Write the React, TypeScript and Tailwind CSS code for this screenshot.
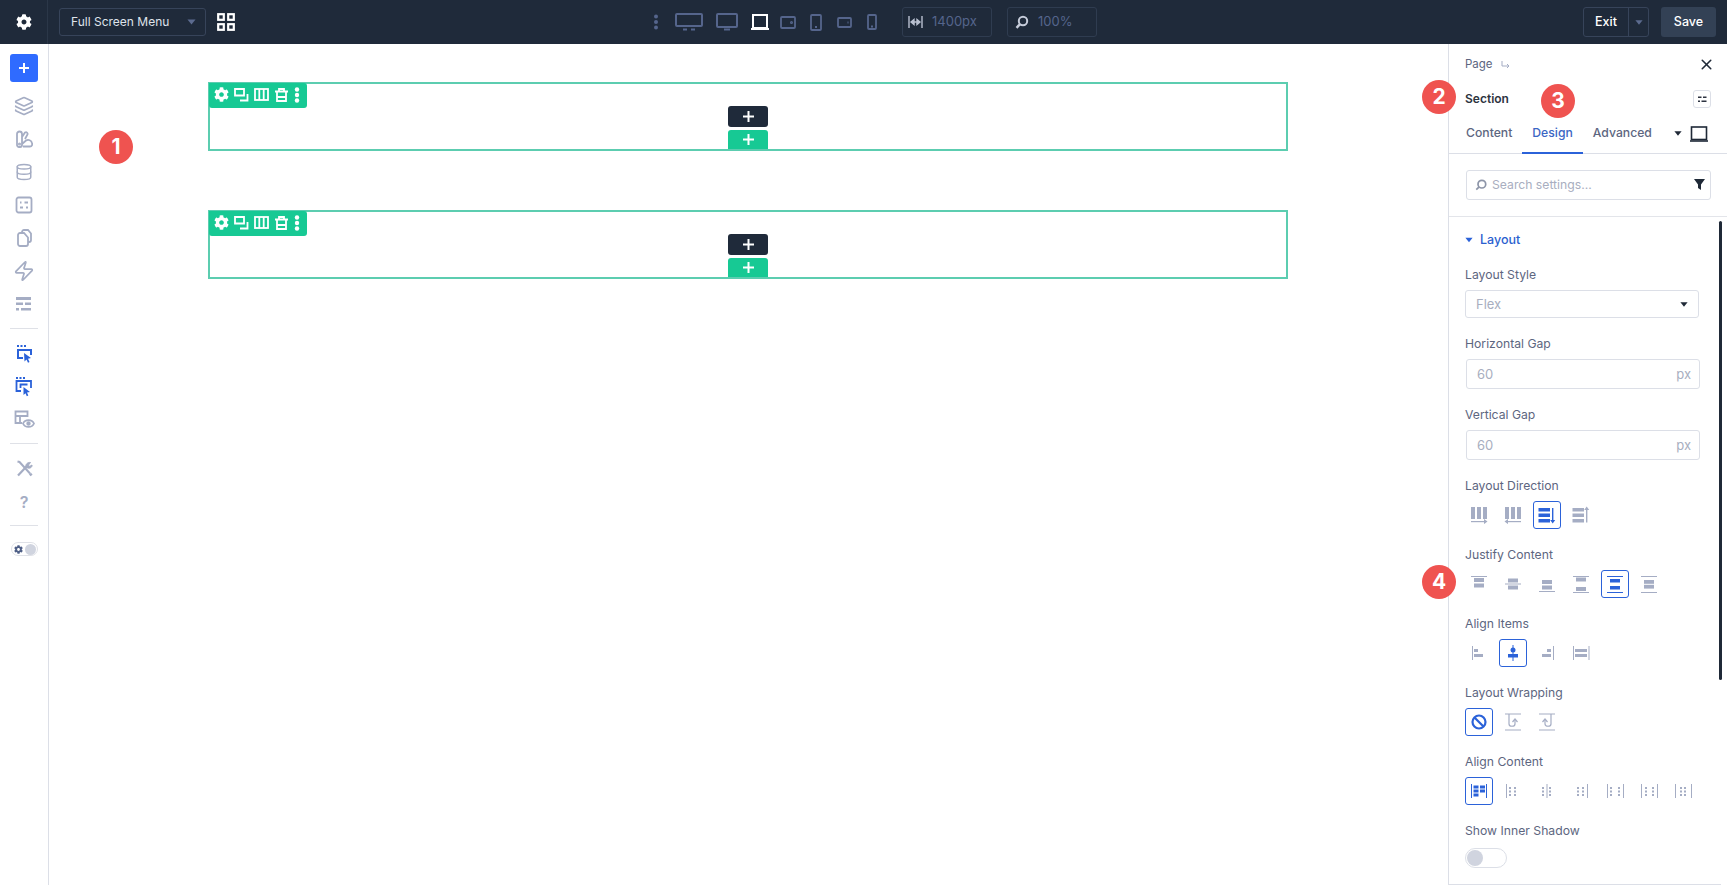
import { Database, Layers, X, Zap } from "lucide-react";
import { FaCog } from "react-icons/fa";

const BLUE = "#2b62d9";

function Badge({ n, className }: { n: number; className: string }) {
  return (
    <div
      className={`absolute z-10 flex h-[34px] w-[34px] items-center justify-center rounded-full bg-[#ef5350] text-[21px] font-bold text-white ${className}`}
    >
      {n}
    </div>
  );
}

function Caret({ className }: { className: string }) {
  return (
    <svg viewBox="0 0 10 6" className={className} fill="currentColor">
      <path d="M0.5 0.3h9L5 5.7z" />
    </svg>
  );
}

/* top bar device icons */
function Devices() {
  const c = "#55658c";
  return (
    <div className="ml-[11px] flex items-center">
      <svg width="6" height="16" viewBox="0 0 6 16" fill={c}>
        <circle cx="3" cy="2.5" r="2" />
        <circle cx="3" cy="8" r="2" />
        <circle cx="3" cy="13.5" r="2" />
      </svg>
      <svg className="ml-[16px]" width="28" height="18" viewBox="0 0 28 18" fill="none" stroke={c} strokeWidth="2">
        <rect x="1" y="1" width="26" height="12" rx="1" />
        <path d="M8 16.5h4M16 16.5h4" />
      </svg>
      <svg className="ml-[13px]" width="22" height="18" viewBox="0 0 22 18" fill="none" stroke={c} strokeWidth="2">
        <rect x="1" y="1" width="20" height="13" rx="1" />
        <path d="M8 16.5h6" />
      </svg>
      <svg className="ml-[13px]" width="18" height="16" viewBox="0 0 18 16" fill="none" stroke="#fff" strokeWidth="2">
        <rect x="2" y="1" width="14" height="13" />
        <path d="M0 15h18" />
      </svg>
      <svg className="ml-[11px]" width="16" height="13" viewBox="0 0 16 13" fill="none" stroke={c} strokeWidth="1.8">
        <rect x="1" y="1" width="14" height="11" rx="1" />
        <circle cx="11.5" cy="6.5" r="0.6" />
      </svg>
      <svg className="ml-[14px]" width="12" height="17" viewBox="0 0 12 17" fill="none" stroke={c} strokeWidth="1.8">
        <rect x="1" y="1" width="10" height="15" rx="1" />
        <path d="M5 13h2" />
      </svg>
      <svg className="ml-[15px]" width="15" height="11" viewBox="0 0 15 11" fill="none" stroke={c} strokeWidth="1.8">
        <rect x="1" y="1" width="13" height="9" rx="1" />
        <path d="M10.5 5.5h1" />
      </svg>
      <svg className="ml-[15px]" width="10" height="16" viewBox="0 0 10 16" fill="none" stroke={c} strokeWidth="1.8">
        <rect x="1" y="1" width="8" height="14" rx="1" />
        <path d="M4 12.5h2" />
      </svg>
      <div className="ml-[25px] flex h-[30px] w-[90px] items-center rounded-[3px] border border-[#2f3c50] pl-[5px] text-[13px] text-[#55658c]">
        <svg width="15" height="14" viewBox="0 0 15 14" fill="none" stroke="#b9c0d0" strokeWidth="1.4">
          <path d="M1 1v12M14 1v12M3 7h9" />
          <path d="M3 7l3-2.5v5zM12 7L9 4.5v5z" fill="#b9c0d0" />
        </svg>
        <span className="ml-[9px]">1400px</span>
      </div>
      <div className="ml-[15px] flex h-[30px] w-[90px] items-center rounded-[3px] border border-[#2f3c50] pl-[7px] text-[13px] text-[#55658c]">
        <svg width="14" height="14" viewBox="0 0 14 14" fill="none" stroke="#c6ccda" strokeWidth="2">
          <circle cx="8" cy="6" r="4.2" />
          <path d="M5 9.2L1.5 12.8" strokeWidth="2.4" />
        </svg>
        <span className="ml-[9px]">100%</span>
      </div>
    </div>
  );
}

function TopBar() {
  return (
    <header className="flex h-11 shrink-0 items-center bg-[#1f2a3a] pr-[11px]">
      <div className="flex h-full w-12 items-center justify-center border-r border-[#2b3748] text-white">
        <FaCog size={16} />
      </div>
      <div className="ml-[11px] flex h-[28px] w-[147px] items-center rounded-[3px] border border-[#37445a] pl-[11px] text-[12px] text-[#dfe3ea]">
        Full Screen Menu
        <Caret className="ml-auto mr-[9px] h-[6px] w-[9px] text-[#5c6b8f]" />
      </div>
      <svg className="ml-[11px]" width="18" height="18" viewBox="0 0 18 18" fill="none" stroke="#fff" strokeWidth="2.2">
        <rect x="1.2" y="1.2" width="5.6" height="5.6" />
        <rect x="11.2" y="1.2" width="5.6" height="5.6" />
        <rect x="1.2" y="11.2" width="5.6" height="5.6" />
        <rect x="11.2" y="11.2" width="5.6" height="5.6" />
      </svg>
      <div className="ml-[407px]">
        <Devices />
      </div>
      <div className="ml-auto flex h-[30px] w-[66px] items-center rounded-[3px] border border-[#37445a] text-[12.5px] font-medium text-white">
        <span className="flex h-full w-[45px] items-center justify-center border-r border-[#37445a]">Exit</span>
        <Caret className="ml-[6px] h-[5px] w-[8px] text-[#5c6b8f]" />
      </div>
      <div className="ml-3 flex h-[30px] w-[55px] items-center justify-center rounded-[3px] bg-[#334155] text-[12.5px] font-medium text-white">
        Save
      </div>
    </header>
  );
}

function SideIcon({ children }: { children: React.ReactNode }) {
  return <div className="flex h-[33px] w-full items-center justify-center text-[#a5adc4]">{children}</div>;
}

function Sidebar() {
  return (
    <aside className="flex w-[49px] shrink-0 flex-col items-center border-r border-[#dcdfe7] pt-[10px]">
      <div className="mb-[7px] flex h-7 w-7 items-center justify-center rounded-[3px] bg-[#2f6bff]">
        <svg width="12" height="12" viewBox="0 0 12 12" stroke="#fff" strokeWidth="2">
          <path d="M6 1v10M1 6h10" />
        </svg>
      </div>
      <SideIcon>
        <Layers size={20} strokeWidth={2} />
      </SideIcon>
      <SideIcon>
        <svg width="18" height="18" viewBox="0 0 18 18" fill="none" stroke="currentColor" strokeWidth="1.8">
          <path d="M2 4a2.5 2.5 0 015 0v11a2 2 0 01-2 2H4a2 2 0 01-2-2zM7 7l3-4.5c1.5-1 3 .5 2.5 2L10 9M8 16.5h7c2 0 2.5-2 2-3.5a4 4 0 00-6-2.5L7 14" />
          <circle cx="4.5" cy="14" r="0.6" />
        </svg>
      </SideIcon>
      <SideIcon>
        <Database size={18} strokeWidth={2} />
      </SideIcon>
      <SideIcon>
        <svg width="18" height="18" viewBox="0 0 18 18" fill="none" stroke="currentColor" strokeWidth="1.8">
          <rect x="1.5" y="1.5" width="15" height="15" rx="2" />
          <path d="M5 6.5h1.5M9.5 6.5H13M5 11.5h3M11 11.5h2" />
        </svg>
      </SideIcon>
      <SideIcon>
        <svg width="15" height="18" viewBox="0 0 15 18" fill="none" stroke="currentColor" strokeWidth="1.8">
          <path d="M5 4V3a2 2 0 012-2h4l3 3.5V11a2 2 0 01-2 2h-1" />
          <path d="M1 6a2 2 0 012-2h4l4 4.5V15a2 2 0 01-2 2H3a2 2 0 01-2-2z" />
        </svg>
      </SideIcon>
      <SideIcon>
        <Zap size={22} strokeWidth={1.9} />
      </SideIcon>
      <SideIcon>
        <svg width="16" height="14" viewBox="0 0 16 14" fill="currentColor">
          <rect y="0" width="15" height="3" />
          <rect y="5.5" width="7" height="2.5" />
          <rect x="9" y="5.5" width="6" height="2.5" />
          <rect y="11" width="3" height="2.5" />
          <rect x="5" y="11" width="10" height="2.5" />
        </svg>
      </SideIcon>
      <div className="my-2 h-px w-7 bg-[#dfe1e7]" />
      <SideIcon>
        <svg width="17" height="20" viewBox="0 0 17 20" fill="none">
          <path d="M1 1h2v2H1zM4.5 1h2v2h-2zM8 1h2v2H8z" fill={BLUE} />
          <path d="M7 14H2V6h13v5" stroke={BLUE} strokeWidth="2" />
          <path d="M8 9l7 5-3 .8 1.5 3.2-1.5.8-1.5-3.2-2 1.9z" fill={BLUE} />
        </svg>
      </SideIcon>
      <SideIcon>
        <svg width="18" height="21" viewBox="0 0 18 21" fill="none">
          <path d="M1 1h2v2H1zM4.5 1h2v2h-2zM8 1h2v2H8z" fill={BLUE} />
          <path d="M6 15H1.5V5H16v7M5.5 12V8.5h7" stroke={BLUE} strokeWidth="1.8" />
          <path d="M8.5 11l6.5 5-3 .6 1.3 3-1.5.7-1.3-3-2 1.8z" fill={BLUE} />
        </svg>
      </SideIcon>
      <SideIcon>
        <svg width="21" height="19" viewBox="0 0 21 19" fill="none" stroke="currentColor" strokeWidth="1.8">
          <path d="M8 13H1.5V1.5h12V7M1.5 6h12M6 6v7" />
          <path d="M9 13.5c2-4.5 9-4.5 11 0-2 4.5-9 4.5-11 0z" fill="#fff" />
          <circle cx="14.5" cy="13.5" r="1.3" fill="currentColor" />
        </svg>
      </SideIcon>
      <div className="mb-2 mt-[7px] h-px w-7 bg-[#dfe1e7]" />
      <SideIcon>
        <svg width="17" height="17" viewBox="0 0 17 17" fill="none" stroke="currentColor" strokeWidth="2">
          <path d="M1.5 1.5l2 .5 10.5 11.5" />
          <path d="M14 13.5l1.5 2" strokeWidth="2.6" />
          <path d="M2 15.5l8.500-9" strokeWidth="2.2" />
          <path d="M10 7c-.8-2.5 1.5-5 4.500-4.500L12.500 5l1 1.500 2.500-1.500C16.500 7.500 13 9.500 10 7z" fill="currentColor" strokeWidth="1" />
        </svg>
      </SideIcon>
      <SideIcon>
        <span className="text-[16px] font-semibold leading-none">?</span>
      </SideIcon>
      <div className="my-[7px] h-px w-7 bg-[#dfe1e7]" />
      <div className="mt-[9px] flex h-[14px] w-[27px] items-center justify-between rounded-full border border-[#dfe1e7] px-[1px]">
        <FaCog size={9} className="ml-[1px] text-[#4f5f86]" />
        <div className="h-[11px] w-[11px] rounded-full bg-[#d0d4df]" />
      </div>
    </aside>
  );
}

function SectionBlock() {
  return (
    <div className="relative h-[69px] w-[1080px] border-2 border-[#5ccdb0]">
      <div className="absolute left-[-1px] top-[-1px] flex h-[25px] w-[98px] items-center gap-[5px] rounded-r-[3px] rounded-b-[3px] bg-[#17c994] pb-[2px] pl-[5px] text-white">
        <FaCog size={15} />
        <svg width="15" height="14" viewBox="0 0 15 14" fill="none" stroke="#fff" strokeWidth="1.8">
          <path d="M1 1h9v6.5H1zM13.5 6v6.5H6" />
        </svg>
        <svg width="15" height="13" viewBox="0 0 15 13" fill="none" stroke="#fff" strokeWidth="1.8">
          <rect x="1" y="1" width="13" height="11" />
          <path d="M5.3 1v11M9.7 1v11" />
        </svg>
        <svg className="ml-[1px]" width="13" height="14" viewBox="0 0 13 14" fill="none" stroke="#fff" strokeWidth="1.8">
          <path d="M0 3.5h13M4 3V1h5v2M2 4v9h9V4M2 9h9" />
        </svg>
        <svg className="ml-[1px]" width="6" height="16" viewBox="0 0 6 16" fill="#fff">
          <circle cx="3" cy="2.5" r="2.2" />
          <circle cx="3" cy="8" r="2.2" />
          <circle cx="3" cy="13.5" r="2.2" />
        </svg>
      </div>
      <div className="absolute bottom-[22px] left-1/2 flex h-[21px] w-[40px] -translate-x-1/2 items-center justify-center rounded-[3px] bg-[#1f2a3a]">
        <svg width="11" height="11" viewBox="0 0 11 11" stroke="#fff" strokeWidth="2">
          <path d="M5.5 0v11M0 5.5h11" />
        </svg>
      </div>
      <div className="absolute bottom-0 left-1/2 flex h-[19px] w-[40px] -translate-x-1/2 items-center justify-center rounded-t-[3px] bg-[#17c994]">
        <svg width="11" height="11" viewBox="0 0 11 11" stroke="#fff" strokeWidth="2">
          <path d="M5.5 0v11M0 5.5h11" />
        </svg>
      </div>
    </div>
  );
}

function Field({ label, children }: { label: string; children: React.ReactNode }) {
  return (
    <div className="mb-[18px]">
      <div className="mb-[7px] h-4 text-[12.2px] leading-4 text-[#5d6680]">{label}</div>
      {children}
    </div>
  );
}

function NumberInput({ value }: { value: string }) {
  return (
    <div className="ml-px flex h-[30px] w-[234px] items-center justify-between rounded-[3px] border border-[#dcdfe7] px-[10px] pr-2 pt-px text-[13px] text-[#a8aec0]">
      <span>{value}</span>
      <span>px</span>
    </div>
  );
}

function IconRow({ active, icons }: { active: number; icons: React.ReactNode[] }) {
  return (
    <div className="flex h-7 gap-[6px]">
      {icons.map((icon, i) => (
        <div
          key={i}
          className={`flex h-7 w-7 items-center justify-center rounded-[3px] ${
            i === active ? "border border-[#2b62d9] text-[#2b62d9]" : "text-[#a5adc4]"
          }`}
        >
          {icon}
        </div>
      ))}
    </div>
  );
}

function Glyph({ children }: { children: React.ReactNode }) {
  return (
    <svg width="18" height="18" viewBox="0 0 18 18" fill="currentColor">
      {children}
    </svg>
  );
}

const bar = (x: number, y: number, w: number, h: number) => <rect x={x} y={y} width={w} height={h} />;
const hline = (y: number) => <rect x="1" y={y} width="16" height="1" />;
const vline = (x: number, y = 2, h = 14) => <rect x={x} y={y} width="1" height={h} />;

const directionIcons = [
  <Glyph key="a">
    {bar(1, 1, 4, 12)}
    {bar(7, 1, 4, 12)}
    {bar(13, 1, 4, 12)}
    {bar(1, 15, 14, 1.2)}
    <path d="M17.5 15.6L14 13.1v5z" />
  </Glyph>,
  <Glyph key="b">
    {bar(1, 1, 4, 12)}
    {bar(7, 1, 4, 12)}
    {bar(13, 1, 4, 12)}
    {bar(3, 15, 14, 1.2)}
    <path d="M0.5 15.6L4 13.1v5z" />
  </Glyph>,
  <Glyph key="c">
    {bar(0.5, 2, 11.5, 3.5)}
    {bar(0.5, 7.5, 11.5, 3.5)}
    {bar(0.5, 13, 11.5, 3.5)}
    {bar(14, 2, 1.4, 13)}
    <path d="M14.7 17.5L12.2 14h5z" />
  </Glyph>,
  <Glyph key="d">
    {bar(0.5, 2, 11.5, 3.5)}
    {bar(0.5, 7.5, 11.5, 3.5)}
    {bar(0.5, 13, 11.5, 3.5)}
    {bar(14, 3.5, 1.4, 13)}
    <path d="M14.7 0.5L12.2 4h5z" />
  </Glyph>,
];

const justifyIcons = [
  <Glyph key="a">{hline(1)}{bar(4, 3, 10, 4)}{bar(4, 8.5, 10, 4)}</Glyph>,
  <Glyph key="b">{bar(4, 3.5, 10, 4)}{hline(8.5)}{bar(4, 10.5, 10, 4)}</Glyph>,
  <Glyph key="c">{bar(4, 5, 10, 4)}{bar(4, 10.5, 10, 4)}{hline(16)}</Glyph>,
  <Glyph key="d">{hline(1)}{bar(4, 2.5, 10, 4)}{bar(4, 12, 10, 4)}{hline(17)}</Glyph>,
  <Glyph key="e">{hline(1)}{bar(4, 4, 10, 3.5)}{bar(4, 11, 10, 3.5)}{hline(17)}</Glyph>,
  <Glyph key="f">{hline(1)}{bar(4, 5, 10, 3.8)}{bar(4, 9.8, 10, 3.8)}{hline(17)}</Glyph>,
];

const alignIcons = [
  <Glyph key="a">{vline(2)}{bar(4, 5, 4, 3)}{bar(4, 10, 9, 3)}</Glyph>,
  <Glyph key="b">
    {vline(8.5, 1, 16)}
    <circle cx="9" cy="6" r="2.5" />
    {bar(4, 10, 10, 3.5)}
  </Glyph>,
  <Glyph key="c">{vline(15)}{bar(9, 5, 4, 3)}{bar(4, 10, 9, 3)}</Glyph>,
  <Glyph key="d">{vline(1)}{vline(16.5)}{bar(3, 5, 12, 3)}{bar(3, 10, 12, 3)}</Glyph>,
];

const wrapIcons = [
  <svg key="a" width="18" height="18" viewBox="0 0 18 18" fill="none" stroke="currentColor" strokeWidth="2.2">
    <circle cx="9" cy="9" r="6.5" />
    <path d="M4.5 4.5l9 9" />
  </svg>,
  <svg key="b" width="18" height="18" viewBox="0 0 18 18" fill="none" stroke="currentColor" strokeWidth="1.2">
    <path d="M1 1h16M1 17h16M5 1v10c0 3 6 3 6 0V7" />
    <path d="M8.5 9L11 6l2.5 3" />
  </svg>,
  <svg key="c" width="18" height="18" viewBox="0 0 18 18" fill="none" stroke="currentColor" strokeWidth="1.2">
    <path d="M1 1h16M1 17h16M13 1v10c0 3-6 3-6 0V7" />
    <path d="M4.5 9L7 6l2.5 3" />
  </svg>,
];

const dots = (x: number) => (
  <>
    {bar(x, 5, 2, 2)}
    {bar(x, 8.5, 2, 2)}
    {bar(x, 12, 2, 2)}
  </>
);

const contentIcons = [
  <Glyph key="a">
    {vline(1)}
    {vline(16)}
    {bar(3.5, 3.5, 5, 3)}
    {bar(10, 3.5, 5, 3)}
    {bar(3.5, 7.5, 5, 3)}
    {bar(10, 7.5, 5, 3)}
    {bar(3.5, 11.5, 5, 3)}
  </Glyph>,
  <Glyph key="b">{vline(2)}{dots(5)}{dots(10)}</Glyph>,
  <Glyph key="c">{dots(4)}{vline(8.5)}{dots(11)}</Glyph>,
  <Glyph key="d">{dots(5)}{dots(10)}{vline(15)}</Glyph>,
  <Glyph key="e">{vline(1)}{dots(4)}{dots(12)}{vline(17)}</Glyph>,
  <Glyph key="f">{vline(1)}{dots(5)}{dots(12)}{vline(17)}</Glyph>,
  <Glyph key="g">{vline(1)}{dots(6)}{dots(10)}{vline(17)}</Glyph>,
];

function SettingsPanel() {
  return (
    <aside className="relative flex w-[279px] shrink-0 flex-col border-l border-[#dcdfe7] bg-white">
      <div className="relative pl-[16px]">
        <div className="flex h-[41px] items-center pt-[1px] text-[11.5px] text-[#5d6680]">
          Page
          <svg className="ml-[8px]" width="9" height="9" viewBox="0 0 9 9" fill="none" stroke="#a5adc4" strokeWidth="1">
            <path d="M1 0v5h7M6 3l2 2-2 2" />
          </svg>
        </div>
        <X className="absolute right-[12px] top-[12px] text-[#1f2937]" size={17} strokeWidth={2.2} />
        <div className="flex h-[28px] items-center pr-[16px] text-[12px] font-semibold text-[#2d3340]">
          Section
          <div className="ml-auto flex h-[18px] w-[18px] items-center justify-center rounded-[3px] border border-[#dcdfe7]">
            <svg width="9" height="7" viewBox="0 0 9 7" fill="#2d3340">
              <rect x="0" y="0.5" width="3.5" height="1.5" />
              <rect x="5" y="0.5" width="3.5" height="1.5" />
              <rect x="0" y="4.5" width="2" height="1.5" />
              <rect x="3.5" y="4.5" width="5" height="1.5" />
            </svg>
          </div>
        </div>
      </div>
      <div className="flex h-[41px] items-center border-b border-[#dcdfe7] pl-[17px] pr-[19px] pt-[1px] text-[12.2px] font-medium text-[#5d6680]">
        <span>Content</span>
        <span className="relative ml-[20px] flex h-full items-center text-[#3b66c4]">
          Design
          <span className="absolute bottom-[-1px] left-[-10px] right-[-10px] h-[2px] bg-[#2b62d9]" />
        </span>
        <span className="ml-[20px]">Advanced</span>
        <Caret className="ml-auto h-[5px] w-[8px] text-[#1f2937]" />
        <svg className="ml-[8px]" width="18" height="16" viewBox="0 0 18 16" fill="none" stroke="#1f2937" strokeWidth="1.6">
          <rect x="1.5" y="1" width="15" height="12.5" />
          <path d="M0 15h18" />
        </svg>
      </div>
      <div className="flex h-[63px] shrink-0 items-center border-b border-[#e3e5ea] pb-[1px] pl-[17px] pr-[16px]">
        <div className="flex h-[30px] w-full items-center rounded-[3px] border border-[#dcdfe7] pl-[8px] pr-[5px] text-[12.2px] text-[#a8aec0]">
          <svg width="12" height="12" viewBox="0 0 14 14" fill="none" stroke="#8d95a8" strokeWidth="2">
            <circle cx="8" cy="6" r="4.5" />
            <path d="M4.5 9.5L1.5 12.5" />
          </svg>
          <span className="ml-[5px] pt-px">Search settings...</span>
          <svg className="ml-auto" width="11" height="11" viewBox="0 0 11 11" fill="#1f2937">
            <path d="M0 0h11L7 5.5V11L4 9V5.5z" />
          </svg>
        </div>
      </div>
      <div className="flex-1 overflow-hidden pl-[16px] pt-[15px]">
        <div className="mb-[19px] flex h-4 items-center text-[12.5px] font-medium text-[#2b5fcf]">
          <Caret className="mr-[7px] h-[6px] w-[8px] text-[#2b62d9]" />
          Layout
        </div>
        <Field label="Layout Style">
          <div className="flex h-7 w-[234px] items-center justify-between rounded-[3px] border border-[#dcdfe7] px-[10px] pt-px text-[13px] text-[#a8aec0]">
            Flex
            <Caret className="h-[5px] w-[8px] text-[#1f2937]" />
          </div>
        </Field>
        <Field label="Horizontal Gap">
          <NumberInput value="60" />
        </Field>
        <Field label="Vertical Gap">
          <NumberInput value="60" />
        </Field>
        <Field label="Layout Direction">
          <IconRow active={2} icons={directionIcons} />
        </Field>
        <Field label="Justify Content">
          <IconRow active={4} icons={justifyIcons} />
        </Field>
        <Field label="Align Items">
          <IconRow active={1} icons={alignIcons} />
        </Field>
        <Field label="Layout Wrapping">
          <IconRow active={0} icons={wrapIcons} />
        </Field>
        <Field label="Align Content">
          <IconRow active={0} icons={contentIcons} />
        </Field>
        <Field label="Show Inner Shadow">
          <div className="mt-[9px] flex h-5 w-[42px] items-center rounded-full border border-[#dcdfe7] pl-[1px]">
            <div className="h-4 w-4 rounded-full bg-[#d0d4df]" />
          </div>
        </Field>
      </div>
      {/* scrollbar and bottom rule */}
      <div className="absolute right-[5px] top-[177px] h-[459px] w-[3px] rounded-full bg-[#1f2937]" />
      <div className="absolute bottom-0 left-0 right-[6px] h-px bg-[#dcdfe7]" />
    </aside>
  );
}

export default function App() {
  return (
    <div className="relative flex h-screen flex-col overflow-hidden bg-white font-[family-name:Inter,sans-serif]">
      <TopBar />
      <div className="flex min-h-0 flex-1">
        <Sidebar />
        <main className="flex flex-1 flex-col gap-[59px] pl-[159px] pt-[38px]">
          <SectionBlock />
          <SectionBlock />
        </main>
        <SettingsPanel />
      </div>
      <Badge n={1} className="left-[99px] top-[130px]" />
      <Badge n={2} className="left-[1422px] top-[80px]" />
      <Badge n={3} className="left-[1541px] top-[84px]" />
      <Badge n={4} className="left-[1422px] top-[565px]" />
    </div>
  );
}
